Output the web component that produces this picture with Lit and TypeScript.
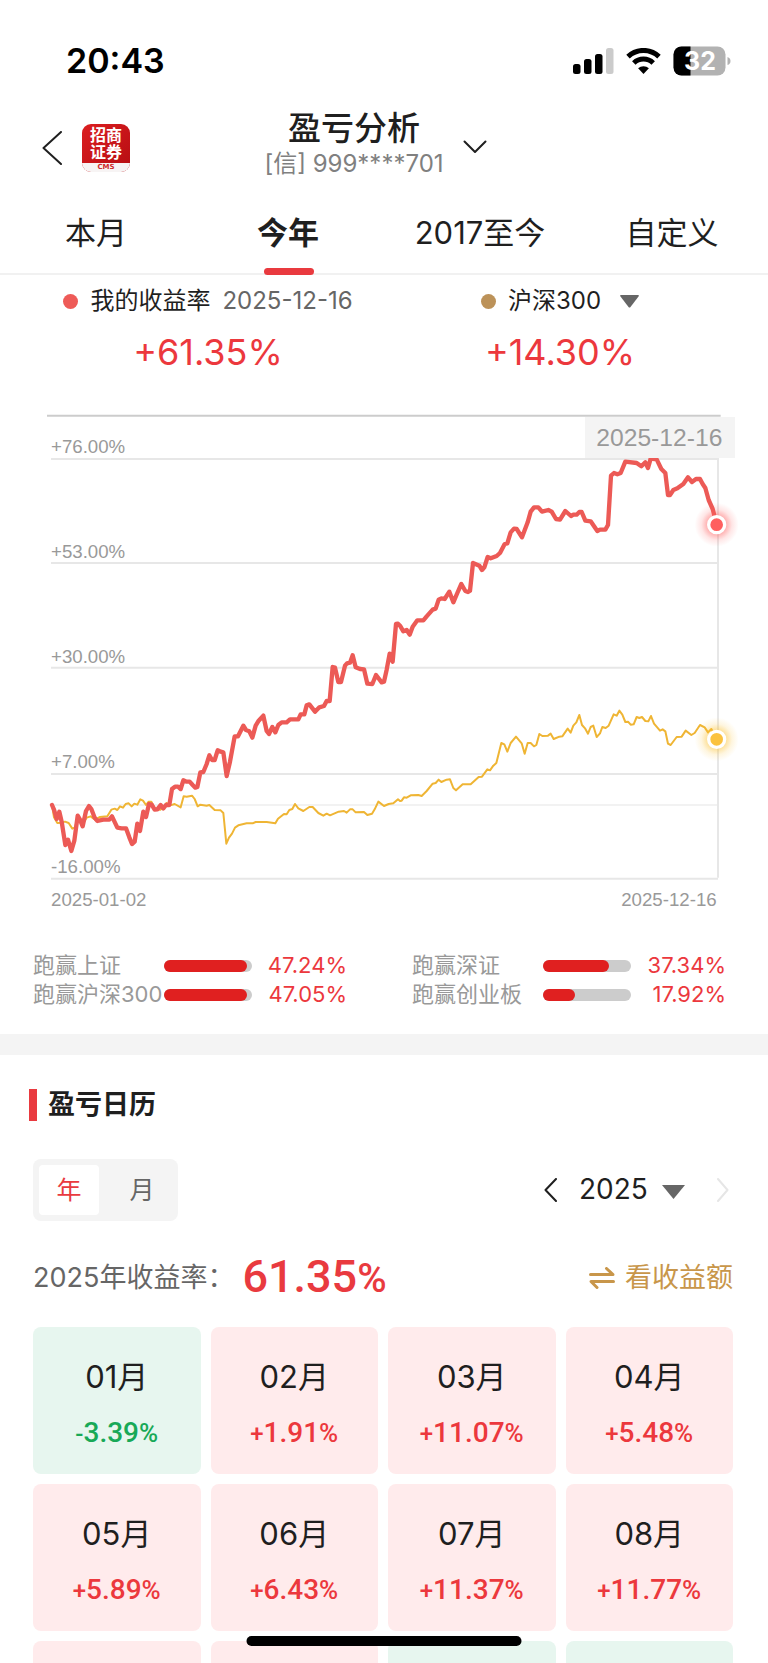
import { LitElement, html, svg, css } from "lit";
import { customElement, state } from "lit/decorators.js";

type Tone = "up" | "down";
interface Month { label: string; sign: string; value: string; tone: Tone; }

const m = (label: string, sign: string, value: string): Month => ({
  label, sign, value, tone: sign === "-" ? "down" : "up",
});

const MONTHS: Month[] = [
  m("01月", "-", "3.39"), m("02月", "+", "1.91"), m("03月", "+", "11.07"), m("04月", "+", "5.48"),
  m("05月", "+", "5.89"), m("06月", "+", "6.43"), m("07月", "+", "11.37"), m("08月", "+", "11.77"),
];
const NEXT_TONES: Tone[] = ["up", "up", "down", "down"];

const BEATS = [
  { name: "跑赢上证", value: "47.24%", fill: 94.5 },
  { name: "跑赢深证", value: "37.34%", fill: 74.7 },
  { name: "跑赢沪深300", value: "47.05%", fill: 94.1 },
  { name: "跑赢创业板", value: "17.92%", fill: 35.9 },
];

// Each series is kept in two halves; the chart's own unit is a third of a pixel.
const H1 = 90;
const H2 = 1200;
const MINE_A = "66,1218 72,1232 80,1260 88,1238 95,1268 106,1338 114,1322 124,1356 133,1325 143,1250 150,1262 158,1282 168,1236 177,1221 184,1230 194,1256 202,1266 220,1262 238,1262 246,1252 262,1286 275,1288 288,1288 298,1315 306,1335 314,1328 322,1274 330,1296 340,1238 348,1254 357,1215 365,1217 374,1232 382,1231 392,1218 400,1228 408,1218 418,1218 426,1170 435,1163 444,1163 452,1170 460,1144 470,1148 479,1148 488,1158 496,1166 502,1164 511,1120 520,1119 530,1095 538,1069 546,1083 554,1083 563,1054 572,1058 580,1060 590,1131 600,1088 614,1012 624,1012 640,980 648,993 658,997 667,1016 677,980 686,965 700,950 710,996 717,1005 727,984 736,1000 745,978 755,970 770,970 780,961 805,961 812,946 823,946 830,919 838,916 855,938 868,925 882,921 890,906 899,906 908,804 915,806 925,849 933,849 945,800 951,793 960,791 968,769 977,805 990,810 1002,811 1012,854 1027,855 1038,828 1055,850 1062,848 1070,812 1079,764 1088,788 1098,675 1104,674";
const MINE_B = "0,680 10,697 20,693 29,707 38,683 52,664 70,664 80,652 98,632 107,629 116,602 124,598 134,600 148,578 160,610 172,582 184,555 196,576 204,579 210,575 219,492 238,500 246,513 253,505 263,474 272,478 290,471 300,462 314,435 322,433 332,400 342,389 350,390 366,415 383,370 392,338 402,325 415,325 426,338 445,333 455,338 468,360 480,362 496,336 513,351 520,347 530,347 538,339 545,339 556,365 572,367 592,396 600,392 616,392 624,378 633,230 642,222 652,226 662,222 676,188 710,192 724,202 736,190 744,207 752,179 770,181 784,210 796,222 804,288 810,288 820,273 832,268 850,255 864,235 876,249 888,240 900,240 908,255 916,267 926,303 938,330 950,376";
const INDEX_A = "66,1218 72,1255 82,1272 95,1271 105,1268 116,1272 127,1289 135,1285 143,1255 158,1275 170,1256 182,1252 195,1262 210,1254 232,1252 244,1232 254,1229 262,1233 270,1222 279,1226 287,1215 296,1213 305,1222 313,1214 322,1217 331,1201 339,1205 348,1218 356,1208 364,1208 373,1226 382,1231 391,1232 400,1224 410,1212 418,1220 434,1215 452,1225 461,1192 470,1193 486,1190 494,1200 503,1222 511,1217 530,1220 538,1218 554,1233 572,1234 580,1242 589,1334 597,1316 606,1304 615,1286 625,1279 650,1273 668,1273 677,1269 710,1269 736,1273 744,1259 762,1245 770,1246 778,1233 787,1230 795,1215 805,1228 820,1236 838,1224 848,1224 865,1242 880,1250 890,1244 900,1249 926,1238 942,1236 950,1241 960,1231 968,1231 977,1240 1002,1239 1012,1248 1026,1244 1034,1231 1045,1208 1062,1221 1076,1215 1090,1213 1104,1201";
const INDEX_B = "0,1206 5,1205 12,1195 20,1196 32,1189 55,1188 65,1191 80,1176 98,1154 107,1152 116,1142 124,1149 140,1142 150,1141 160,1167 168,1174 188,1156 212,1156 236,1134 246,1133 262,1111 270,1114 280,1100 289,1092 304,1032 313,1036 322,1058 332,1032 348,1013 365,1033 374,1064 383,1032 392,1032 402,1042 409,1038 418,1005 427,1011 444,1010 452,1004 461,1020 478,1013 487,1012 503,989 512,1001 520,980 529,970 538,948 546,978 555,988 564,1004 572,984 580,980 590,1014 600,1003 607,984 617,987 626,980 641,946 650,950 658,935 667,947 676,969 684,968 692,977 701,976 710,954 718,957 726,954 736,966 745,967 753,951 762,974 780,995 788,991 796,997 804,1034 812,1038 830,1014 845,1013 857,995 874,1008 884,1002 900,978 914,985 924,1000 934,990 950,1020";

const shift = (pts: string, dx: number) =>
  pts.split(" ").map((p) => { const [x, y] = p.split(",").map(Number); return `${x + dx},${y}`; }).join(" ");
const series = (a: string, b: string) => `${shift(a, H1)} ${shift(b, H2)}`;

@customElement("return-chart")
export class ReturnChart extends LitElement {
  static styles = css`
    :host { display: block; }
    .chart { display: block; width: 100%; height: auto; font-family: "Liberation Sans", Arial, sans-serif; }
    .axis { font-size: 56px; fill: #999; }
    .tip { font-size: 74px; fill: #999; }
    .tip-bg { fill: #f4f4f4; }
    .grid { stroke: #e7e7e7; stroke-width: 6; }
    .zero { stroke: #f2f2f2; stroke-width: 6; }
    .top { stroke: #ccc; stroke-width: 6; }
    .line { fill: none; stroke-linejoin: round; stroke-linecap: round; }
    .mine { stroke: #ec5a56; stroke-width: 13; }
    .index { stroke: #efb534; stroke-width: 6; }
  `;

  render() {
    const rows: [string, number, number][] = [
      ["+76.00%", 162, 180], ["+53.00%", 477, 492], ["+30.00%", 792, 806],
      ["+7.00%", 1107, 1125], ["-16.00%", 1421, 1439],
    ];
    return html`
      <svg class="chart" viewBox="0 0 2304 1560" role="img" aria-label="收益率走势">
        <defs>
          <radialGradient id="glow-red"><stop offset="0.4" stop-color="#ff5a5a" stop-opacity="0.5"/><stop offset="0.7" stop-color="#ff5a5a" stop-opacity="0.15"/><stop offset="1" stop-color="#ff5a5a" stop-opacity="0"/></radialGradient>
          <radialGradient id="glow-gold"><stop offset="0.4" stop-color="#fbc02d" stop-opacity="0.5"/><stop offset="0.7" stop-color="#fbc02d" stop-opacity="0.15"/><stop offset="1" stop-color="#fbc02d" stop-opacity="0"/></radialGradient>
        </defs>
        <line class="top" x1="141" x2="2162" y1="50" y2="50"/>
        ${rows.map(([t, ty, ly]) => svg`
          <line class="grid" x1="153" x2="2154" y1=${ly} y2=${ly}/>
          <text class="axis" x="153" y=${ty}>${t}</text>`)}
        <line class="zero" x1="153" x2="2154" y1="1218" y2="1218"/>
        <line class="grid" x1="2154" x2="2154" y1="177" y2="1436"/>
        <polyline class="line index" points=${series(INDEX_A, INDEX_B)}/>
        <polyline class="line mine" points=${series(MINE_A, MINE_B)}/>
        <rect class="tip-bg" x="1755" y="54" width="450" height="123"/>
        <text class="tip" x="1978" y="140" text-anchor="middle">2025-12-16</text>
        <text class="axis" x="153" y="1520">2025-01-02</text>
        <text class="axis" x="2150" y="1520" text-anchor="end">2025-12-16</text>
        <circle cx="2150" cy="377" r="66" fill="url(#glow-red)"/>
        <circle cx="2150" cy="377" r="24" fill="#ff5f5f" stroke="#fff" stroke-width="10"/>
        <circle cx="2150" cy="1021" r="66" fill="url(#glow-gold)"/>
        <circle cx="2150" cy="1021" r="24" fill="#fbc23e" stroke="#fff" stroke-width="10"/>
      </svg>`;
  }
}

@customElement("app-root")
export class AppRoot extends LitElement {
  @state() private tab = 1;
  @state() private unit = 0;

  static styles = css`
    :host {
      display: block; height: 100vh; overflow: hidden; background: #fff; color: #1f1f1f;
      font-family: Inter, "Noto Sans CJK SC", sans-serif; font-size: 24px; line-height: 1.2;
    }
    * { box-sizing: border-box; }
    button, select {
      appearance: none; border: 0; margin: 0; padding: 0; background: none; color: inherit;
      font: inherit; border-radius: 0; cursor: pointer;
    }
    svg { display: block; flex: none; }

    .status { display: flex; justify-content: space-between; align-items: center; height: 100px; padding: 22px 37px 0 66px; }
    .time { font-size: 34px; font-weight: 600; color: #000; }
    .signals { display: flex; align-items: center; gap: 12px; }
    .batt-num { font: 700 25px Inter, sans-serif; fill: #fff; }

    .header { display: grid; grid-template-columns: 1fr auto 1fr; align-items: center; height: 92px; padding: 0 32px 4px; }
    .left { display: flex; align-items: center; gap: 20px; padding: 8px 0 0 10px; }
    .logo {
      display: flex; flex-direction: column; width: 48px; height: 48px; border-radius: 9px; overflow: hidden;
      background: linear-gradient(135deg, #dc1e20, #b50d12); color: #fff; text-align: center;
    }
    .logo-name { flex: 1; padding-top: 3px; font-size: 16px; line-height: 17px; font-weight: 700; }
    .logo-sub { background: #f7f4f4; color: #cf2a2a; font: 700 7px/9px "DejaVu Sans", sans-serif; }
    .account { display: flex; align-items: center; gap: 19px; padding-right: 17px; }
    .names { display: flex; flex-direction: column; align-items: center; }
    .title { font-size: 33px; line-height: 40px; font-weight: 500; }
    .sub { font-size: 24px; line-height: 32px; color: #808080; }
    .chev { margin-top: 6px; }

    .tabs { display: grid; grid-template-columns: repeat(4, 1fr); height: 83px; border-bottom: 2px solid #f1f1f1; }
    .tab { position: relative; font-size: 31px; }
    .tab.on { font-weight: 700; }
    .tab.on::after {
      content: ""; position: absolute; left: 50%; bottom: -2px; width: 50px; height: 7px;
      margin-left: -24px; border-radius: 4px; background: #e93a3f;
    }

    .legend { display: grid; grid-template-columns: 1fr 1fr; padding: 6px 32px 25px; }
    .item { display: flex; flex-direction: column; align-items: center; gap: 9px; }
    .name { display: flex; align-items: center; height: 40px; font-size: 24px; }
    .dot { width: 15px; height: 15px; border-radius: 50%; margin-right: 12px; background: #ee5b58; }
    .dot.gold { background: #bc9259; }
    .date { margin-left: 12px; color: #666; }
    .caret { margin-left: 18px; }
    .rate { font-size: 36px; line-height: 44px; color: #ec383d; }

    .beats { display: grid; grid-template-columns: 1fr 1fr; column-gap: 65px; padding: 32px 42px 25px 33px; }
    .beat { display: grid; grid-template-columns: 131px 88px 1fr; align-items: center; height: 29px; font-size: 22px; }
    .beat-name { color: #999; white-space: nowrap; }
    .track { height: 12px; border-radius: 6px; background: #ccc; }
    .fill { height: 12px; border-radius: 6px; background: #e02020; }
    .beat-val { text-align: right; color: #ec383d; }

    .calendar { border-top: 21px solid #f4f4f4; padding: 34px 35px 0 33px; }
    .h { display: flex; align-items: center; gap: 11px; margin: 0 0 0 -4px; font-size: 27px; line-height: 32px; font-weight: 700; }
    .h::before { content: ""; width: 8px; height: 32px; background: #e93a3f; }
    .bar { display: flex; align-items: center; justify-content: space-between; margin-top: 38px; }
    .seg { display: flex; gap: 13px; padding: 6px; border-radius: 8px; background: #f4f4f4; }
    .seg-btn { width: 60px; height: 50px; border-radius: 4px; font-size: 25px; color: #666; }
    .seg-btn.on { background: #fff; color: #e93a3f; }
    .year { display: flex; align-items: center; font-size: 28px; padding-right: 4px; }
    .year-sel { margin: 0 14px 0 22px; }
    .year-caret { margin-top: 4px; }
    .next { margin-left: 32px; }

    .sum { display: flex; align-items: center; justify-content: space-between; height: 106px; padding-top: 8px; }
    .sum-l { display: flex; align-items: center; gap: 8px; }
    .sum-t { font-size: 27px; color: #666; }
    .sum-v { font: 500 45px/52px Roboto, sans-serif; color: #e93a3f; }
    .pct { font-size: 40px; }
    .swap { display: flex; align-items: center; gap: 10px; font-size: 27px; color: #c8964a; }

    .months { display: grid; grid-template-columns: repeat(4, 1fr); gap: 10px; }
    .month {
      display: flex; flex-direction: column; align-items: center; height: 147px; padding-top: 28px;
      gap: 14px; border-radius: 8px; background: #ffebec; color: #ec383d;
    }
    .month.down { background: #e7f6ef; color: #18a957; }
    .m-name { font-size: 31px; line-height: 44px; color: #1f1f1f; }
    .m-val { font: 500 28px/40px Roboto, sans-serif; }
    .m-sign { font-size: 24px; }
    .m-pct { font-size: 26px; }

    .home { position: fixed; left: 50%; bottom: 17px; width: 275px; height: 10px; transform: translateX(-50%); border-radius: 5px; background: #000; }
  `;

  private arrow(dir: "l" | "r", w: number, h: number, color: string, sw: number) {
    const d = dir === "l" ? `M${w - 1} 1L1.5 ${h / 2}L${w - 1} ${h - 1}` : `M1 1L${w - 1.5} ${h / 2}L1 ${h - 1}`;
    return html`<svg width=${w} height=${h} fill="none" stroke=${color} stroke-width=${sw} stroke-linecap="round" stroke-linejoin="round"><path d=${d}/></svg>`;
  }

  render() {
    const tabs = ["本月", "今年", "2017至今", "自定义"];
    return html`
      <div class="status">
        <span class="time">20:43</span>
        <div class="signals">
          <svg width="41" height="26"><rect x="0" y="16" width="7.5" height="10" rx="2.5"/><rect x="11" y="11" width="7.5" height="15" rx="2.5"/><rect x="22" y="6" width="7.5" height="20" rx="2.5"/><rect x="33" y="0" width="7.5" height="26" rx="2.5" fill="#cbcbcb"/></svg>
          <svg width="35" height="26" fill="none" stroke="#000" stroke-width="5"><path d="M2 8.6A22.5 22.5 0 0 1 33 8.6"/><path d="M7.8 15A14 14 0 0 1 27.2 15"/><path d="M17.5 26L12.1 20.3A8 8 0 0 1 22.9 20.3Z" fill="#000" stroke="none"/></svg>
          <svg width="58" height="30" role="img" aria-label="32">
            <defs><clipPath id="b"><rect x="0.5" y="0.5" width="52" height="29" rx="8"/></clipPath></defs>
            <g clip-path="url(#b)"><rect width="53" height="30" fill="#b2b2b2"/><rect width="17.5" height="30"/></g>
            <path d="M54.5 11Q57.500 12 57.500 15T54.500 19Z" fill="#b2b2b2"/>
            <text class="batt-num" x="27" y="24" text-anchor="middle">32</text>
          </svg>
        </div>
      </div>

      <header class="header">
        <div class="left">
          <button aria-label="返回">${this.arrow("l", 20, 34, "#1f1f1f", 2)}</button>
          <div class="logo"><span class="logo-name">招商<br>证券</span><span class="logo-sub">CMS</span></div>
        </div>
        <button class="account">
          <span class="names"><span class="title">盈亏分析</span><span class="sub">[信] 999****701</span></span>
          <svg class="chev" width="24" height="14" fill="none" stroke="#1f1f1f" stroke-width="2" stroke-linecap="round" stroke-linejoin="round"><path d="M1.500 1.500L12 12L22.500 1.500"/></svg>
        </button>
      </header>

      <nav class="tabs" role="tablist">
        ${tabs.map((t, i) => html`<button role="tab" aria-selected=${this.tab === i} class="tab ${this.tab === i ? "on" : ""}" @click=${() => (this.tab = i)}>${t}</button>`)}
      </nav>

      <section class="legend">
        <div class="item">
          <div class="name"><i class="dot"></i>我的收益率<span class="date">2025-12-16</span></div>
          <div class="rate">+61.35%</div>
        </div>
        <div class="item">
          <div class="name"><i class="dot gold"></i>
            <select aria-label="对比指数"><option>沪深300</option></select>
            <svg class="caret" width="19" height="13"><path d="M1 0H18Q19.500 0 18.500 1.500L10.500 12Q9.500 13 8.500 12L0.500 1.500Q-0.500 0 1 0Z" fill="#666"/></svg>
          </div>
          <div class="rate">+14.30%</div>
        </div>
      </section>

      <return-chart></return-chart>

      <section class="beats">
        ${BEATS.map((b) => html`<div class="beat"><span class="beat-name">${b.name}</span><div class="track"><div class="fill" style="width:${b.fill}%"></div></div><span class="beat-val">${b.value}</span></div>`)}
      </section>

      <section class="calendar">
        <h2 class="h">盈亏日历</h2>
        <div class="bar">
          <div class="seg">
            ${["年", "月"].map((t, i) => html`<button class="seg-btn ${this.unit === i ? "on" : ""}" aria-pressed=${this.unit === i} @click=${() => (this.unit = i)}>${t}</button>`)}
          </div>
          <div class="year">
            <button aria-label="上一年">${this.arrow("l", 13, 24, "#1f1f1f", 2)}</button>
            <select class="year-sel" aria-label="年份"><option>2025</option></select>
            <svg class="year-caret" width="23" height="14"><path d="M0 0H23L11.500 14Z" fill="#666"/></svg>
            <button class="next" aria-label="下一年" disabled>${this.arrow("r", 12, 24, "#e6e6e6", 2)}</button>
          </div>
        </div>
        <div class="sum">
          <div class="sum-l"><span class="sum-t">2025年收益率：</span><span class="sum-v">61.35<span class="pct">%</span></span></div>
          <button class="swap">
            <svg width="26" height="22" fill="none" stroke="#c8964a" stroke-width="3" stroke-linecap="round" stroke-linejoin="round"><path d="M1.500 7.500H24L17.500 1.500M24.500 14.500H2L8 20.500"/></svg>
            看收益额
          </button>
        </div>
        <div class="months">
          ${MONTHS.map((c) => html`<button class="month ${c.tone}"><span class="m-name">${c.label}</span><span class="m-val"><span class="m-sign">${c.sign}</span>${c.value}<span class="m-pct">%</span></span></button>`)}
          ${NEXT_TONES.map((t) => html`<div class="month ${t}"></div>`)}
        </div>
      </section>
      <div class="home"></div>`;
  }
}
